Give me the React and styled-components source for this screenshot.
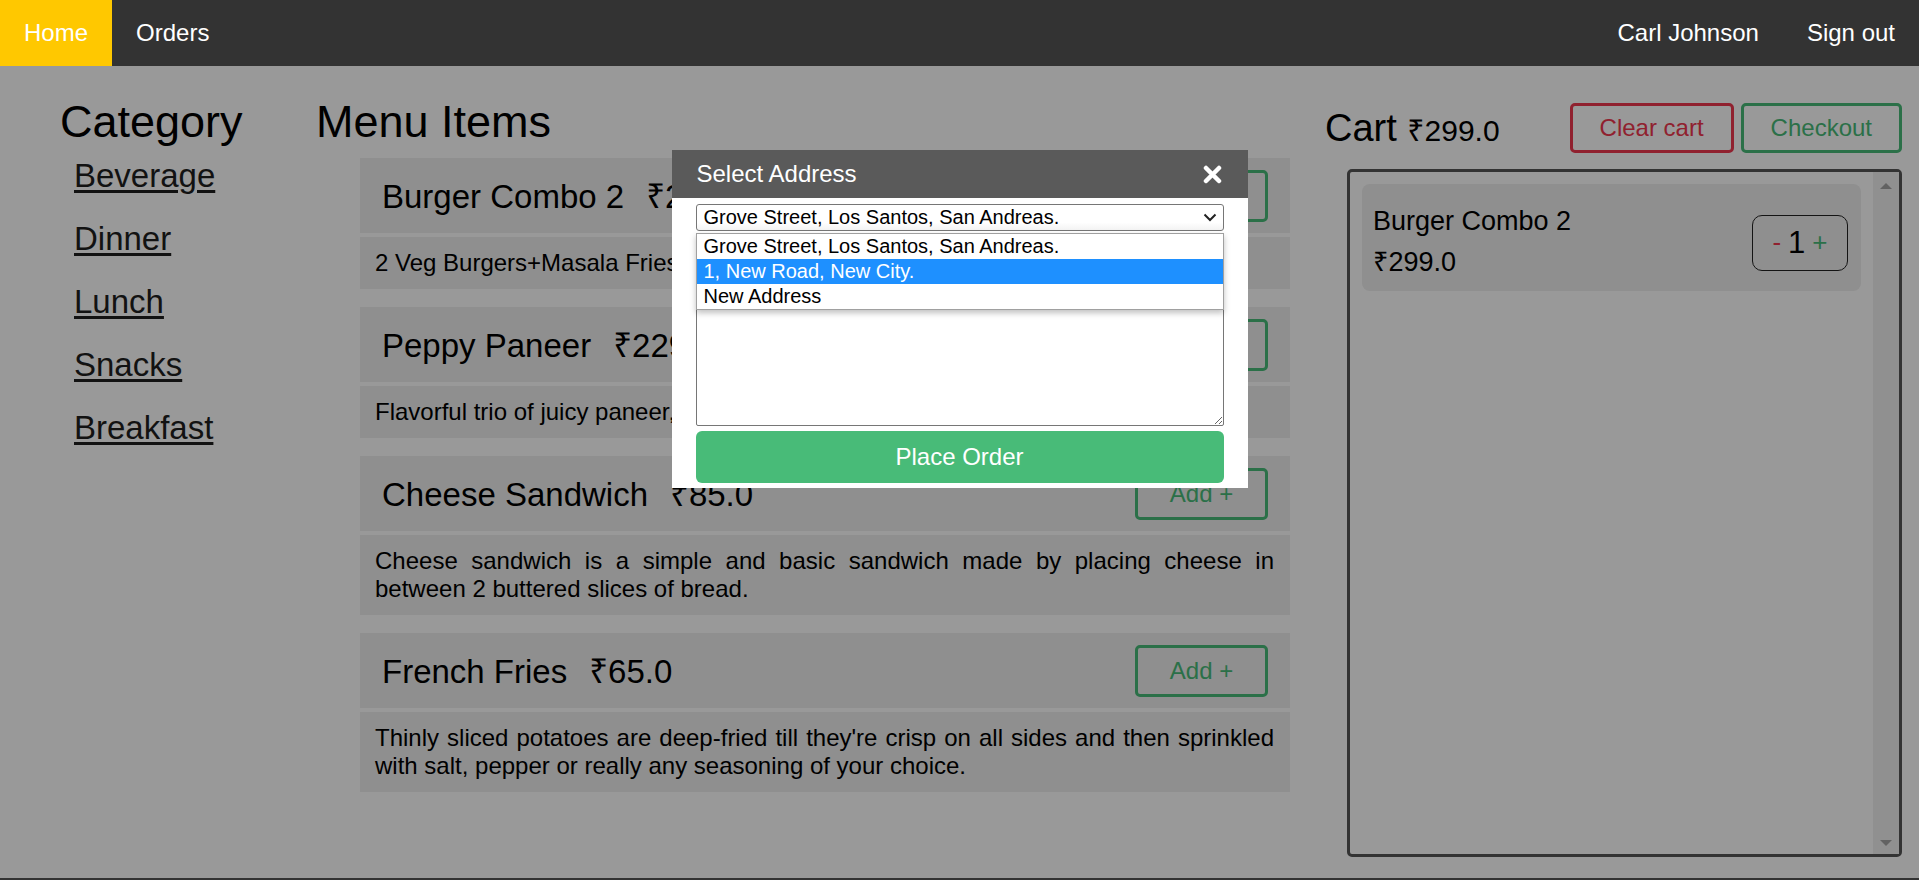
import React from 'react'
import styled, { createGlobalStyle } from 'styled-components'

const GlobalStyle = createGlobalStyle`
  html, body {
    margin: 0;
    padding: 0;
    overflow: hidden;
    background: #fff;
    font-family: "Liberation Sans", "Noto Sans", Arial, sans-serif;
  }
  * { box-sizing: border-box; }
`

const Nav = styled.nav`
  position: relative;
  z-index: 30;
  height: 66px;
  display: flex;
  background: #333;
`

const NavItem = styled.div`
  display: flex;
  align-items: center;
  padding: 0 24px;
  font-size: 24px;
  color: #fff;
  background: ${p => (p.$active ? '#ffc800' : 'transparent')};
`

const Spacer = styled.div`
  flex: 1;
`

const Main = styled.main`
  display: flex;
  height: 812px;
  padding: 30px 17px 21px 60px;
`

const CategoryCol = styled.section`
  width: 256px;
  flex-shrink: 0;
`

const Heading = styled.h1`
  margin: 0;
  font-size: 45px;
  font-weight: 400;
  color: #000;
`

const CategoryList = styled.div`
  display: flex;
  flex-direction: column;
  gap: 25px;
  margin-top: 9px;
  padding-left: 14px;
`

const CategoryLink = styled.a`
  font-size: 33px;
  color: #1e1e1e;
  text-decoration: underline;
  text-underline-offset: 3px;
  align-self: flex-start;
`

const MenuCol = styled.section`
  width: 974px;
  flex-shrink: 0;
`

const CardList = styled.div`
  display: flex;
  flex-direction: column;
  gap: 18px;
  margin: 10px 0 0 44px;
`

const Card = styled.article`
  display: flex;
  flex-direction: column;
  gap: 4px;
`

const CardHead = styled.div`
  height: 75px;
  display: flex;
  align-items: center;
  justify-content: space-between;
  padding: 0 22px;
  background: #eee;
`

const ItemName = styled.h2`
  margin: 0;
  font-size: 33px;
  font-weight: 400;
  color: #000;
`

const ItemPrice = styled.span`
  margin-left: 22px;
`

const AddButton = styled.button`
  height: 52px;
  width: 133px;
  border: 3px solid #48bb78;
  border-radius: 5px;
  background: transparent;
  color: #48bb78;
  font-family: inherit;
  font-size: 24px;
`

const CardDesc = styled.p`
  margin: 0;
  padding: 12px 16px 12px 15px;
  background: #eee;
  font-size: 24px;
  color: #000;
  text-align: justify;
`

const CartCol = styled.section`
  flex: 1;
  display: flex;
  flex-direction: column;
  margin-left: 35px;
  padding-top: 7px;
`

const CartHead = styled.div`
  display: flex;
  align-items: center;
  justify-content: space-between;
  height: 50px;
`

const CartTitle = styled.h2`
  margin: 0;
  font-size: 38px;
  font-weight: 400;
  color: #000;
`

const CartTotal = styled.span`
  font-size: 30px;
`

const ButtonGroup = styled.div`
  display: flex;
  gap: 7px;
`

const OutlineButton = styled.button`
  height: 50px;
  padding: 0 27px;
  border: 3px solid ${p => p.$color};
  border-radius: 5px;
  background: transparent;
  color: ${p => p.$color};
  font-family: inherit;
  font-size: 24px;
`

const CartBox = styled.div`
  flex: 1;
  display: flex;
  margin: 16px 0 0 22px;
  border: 3px solid #555;
  border-radius: 5px;
`

const CartItems = styled.div`
  flex: 1;
  padding: 12px;
`

const CartItem = styled.div`
  display: flex;
  align-items: center;
  justify-content: space-between;
  padding: 22px 13px 12px 11px;
  background: #eee;
  border-radius: 8px;
`

const CartInfo = styled.div`
  display: flex;
  flex-direction: column;
  gap: 5px;
  font-size: 27px;
  color: #000;
`

const Qty = styled.div`
  width: 96px;
  height: 56px;
  display: flex;
  align-items: center;
  justify-content: center;
  gap: 7px;
  border: 1px solid #222;
  border-radius: 10px;
`

const QtyBtn = styled.span`
  font-size: 26px;
  color: ${p => p.$color};
`

const QtyNum = styled.span`
  font-size: 31px;
  color: #000;
`

const ScrollTrack = styled.div`
  width: 26px;
  display: flex;
  flex-direction: column;
  justify-content: space-between;
  align-items: center;
  padding: 11px 0 8px;
  background: #f0f0f0;
`

const Arrow = styled.div`
  width: 0;
  height: 0;
  border-left: 6px solid transparent;
  border-right: 6px solid transparent;
  ${p => (p.$down ? 'border-top: 6px solid #a3a3a3;' : 'border-bottom: 6px solid #a3a3a3;')}
`

const Footer = styled.footer`
  height: 2px;
  background: #555;
`

const Overlay = styled.div`
  position: fixed;
  top: 66px;
  left: 0;
  right: 0;
  bottom: 0;
  z-index: 10;
  background: rgba(0, 0, 0, 0.4);
`

const Modal = styled.div`
  position: fixed;
  top: 150px;
  left: 50%;
  transform: translateX(-50%);
  width: 576px;
  z-index: 20;
  background: #fff;
`

const ModalHead = styled.div`
  height: 48px;
  display: flex;
  align-items: center;
  justify-content: space-between;
  padding: 0 26px 0 25px;
  background: #5a5a5a;
  color: #fff;
  font-size: 24px;
`

const ModalBody = styled.div`
  display: flex;
  flex-direction: column;
  padding: 6px 24px 5px;
`

const SelectWrap = styled.div`
  position: relative;
`

const SelectBox = styled.div`
  height: 27px;
  display: flex;
  align-items: center;
  justify-content: space-between;
  padding: 0 6px 0 7px;
  border: 1px solid #767676;
  border-radius: 3px;
  background: linear-gradient(#fff 70%, #f3f3f3);
  font-size: 20px;
  color: #000;
`

const Dropdown = styled.ul`
  position: absolute;
  top: 29px;
  left: 0;
  right: 0;
  z-index: 2;
  margin: 0;
  padding: 0;
  list-style: none;
  background: #fff;
  border: 1px solid #a0a0a0;
  box-shadow: 0 3px 6px rgba(0, 0, 0, 0.25);
`

const Option = styled.li`
  height: 25px;
  line-height: 25px;
  padding: 0 7px;
  font-size: 20px;
  color: ${p => (p.$selected ? '#fff' : '#000')};
  background: ${p => (p.$selected ? '#1e90ff' : 'transparent')};
`

const AddressInput = styled.textarea`
  display: block;
  width: 100%;
  height: 190px;
  margin-top: 5px;
  border: 1px solid #767676;
  border-radius: 2px;
  resize: vertical;
  font-family: inherit;
`

const PlaceOrder = styled.button`
  height: 52px;
  margin-top: 5px;
  border: none;
  border-radius: 6px;
  background: #48bb78;
  color: #fff;
  font-family: inherit;
  font-size: 24px;
`

const menu = [
  { name: 'Burger Combo 2', price: '299.0', desc: '2 Veg Burgers+Masala Fries+2 Cokes' },
  { name: 'Peppy Paneer', price: '229.0', desc: 'Flavorful trio of juicy paneer, crisp capsicum and red paprika' },
  { name: 'Cheese Sandwich', price: '85.0', desc: 'Cheese sandwich is a simple and basic sandwich made by placing cheese in between 2 buttered slices of bread.' },
  { name: 'French Fries', price: '65.0', desc: "Thinly sliced potatoes are deep-fried till they're crisp on all sides and then sprinkled with salt, pepper or really any seasoning of your choice." },
]

const categories = ['Beverage', 'Dinner', 'Lunch', 'Snacks', 'Breakfast']

const addresses = ['Grove Street, Los Santos, San Andreas.', '1, New Road, New City.', 'New Address']

const App = () => {
  return (
    <>
      <GlobalStyle />
      <Nav>
        <NavItem $active>Home</NavItem>
        <NavItem>Orders</NavItem>
        <Spacer />
        <NavItem>Carl Johnson</NavItem>
        <NavItem>Sign out</NavItem>
      </Nav>
      <Main>
        <CategoryCol>
          <Heading>Category</Heading>
          <CategoryList>
            {categories.map(c => (
              <CategoryLink key={c} href="#">{c}</CategoryLink>
            ))}
          </CategoryList>
        </CategoryCol>
        <MenuCol>
          <Heading>Menu Items</Heading>
          <CardList>
            {menu.map(m => (
              <Card key={m.name}>
                <CardHead>
                  <ItemName>
                    {m.name}<ItemPrice>₹{m.price}</ItemPrice>
                  </ItemName>
                  <AddButton>Add +</AddButton>
                </CardHead>
                <CardDesc>{m.desc}</CardDesc>
              </Card>
            ))}
          </CardList>
        </MenuCol>
        <CartCol>
          <CartHead>
            <CartTitle>Cart <CartTotal>₹299.0</CartTotal></CartTitle>
            <ButtonGroup>
              <OutlineButton $color="#f0384f">Clear cart</OutlineButton>
              <OutlineButton $color="#48bb78">Checkout</OutlineButton>
            </ButtonGroup>
          </CartHead>
          <CartBox>
            <CartItems>
              <CartItem>
                <CartInfo>
                  <span>Burger Combo 2</span>
                  <span>₹299.0</span>
                </CartInfo>
                <Qty>
                  <QtyBtn $color="#f0384f">-</QtyBtn>
                  <QtyNum>1</QtyNum>
                  <QtyBtn $color="#48bb78">+</QtyBtn>
                </Qty>
              </CartItem>
            </CartItems>
            <ScrollTrack>
              <Arrow />
              <Arrow $down />
            </ScrollTrack>
          </CartBox>
        </CartCol>
      </Main>
      <Footer />
      <Overlay />
      <Modal>
        <ModalHead>
          <span>Select Address</span>
          <svg width="19" height="19" viewBox="0 0 19 19">
            <path d="M3 3 L16 16 M16 3 L3 16" stroke="#fff" strokeWidth="4.5" strokeLinecap="round" />
          </svg>
        </ModalHead>
        <ModalBody>
          <SelectWrap>
            <SelectBox>
              <span>{addresses[0]}</span>
              <svg width="14" height="9" viewBox="0 0 14 9">
                <path d="M1.5 1.5 L7 7 L12.5 1.5" stroke="#222" strokeWidth="2" fill="none" />
              </svg>
            </SelectBox>
            <Dropdown>
              {addresses.map((a, i) => (
                <Option key={a} $selected={i === 1}>{a}</Option>
              ))}
            </Dropdown>
          </SelectWrap>
          <AddressInput />
          <PlaceOrder>Place Order</PlaceOrder>
        </ModalBody>
      </Modal>
    </>
  )
}

export default App
